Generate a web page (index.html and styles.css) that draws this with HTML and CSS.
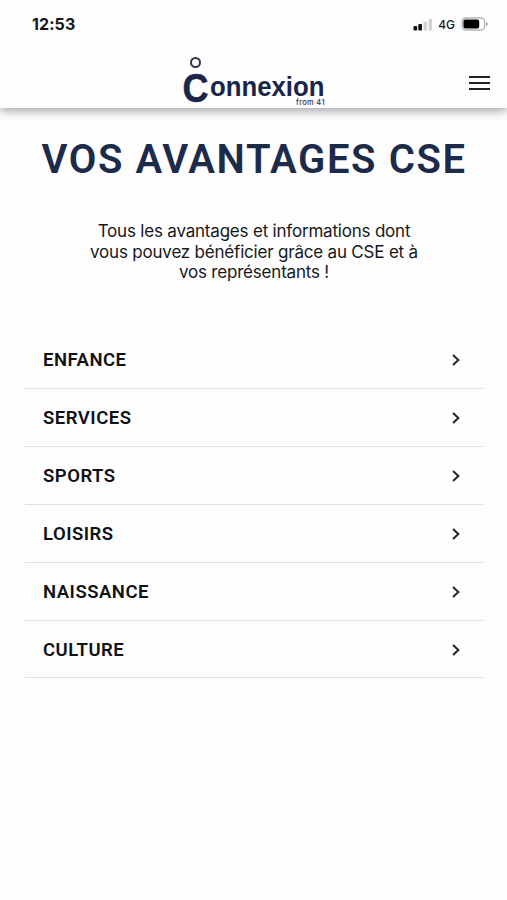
FILE: index.html
```html
<!DOCTYPE html>
<html lang="fr">

<head>
  <meta charset="UTF-8" />
  <meta name="viewport" content="width=device-width, initial-scale=1.0" />
  <title>Connexion - Vos avantages CSE</title>
  <link rel="stylesheet" href="styles.css">
</head>

<body>
  <div class="status-bar">
    <span class="clock">12:53</span>
    <div class="status-icons">
      <svg class="signal" width="20" height="13" viewBox="0 0 20 13">
        <rect x="0.5" y="8" width="3.7" height="4.4" rx="1" fill="#111" />
        <rect x="5.3" y="6" width="3.7" height="6.4" rx="1" fill="#111" />
        <rect x="10.5" y="3.4" width="3.5" height="9" rx="1" fill="#d2d2d3" />
        <rect x="15.5" y="0.8" width="3.5" height="11.6" rx="1" fill="#d2d2d3" />
      </svg>
      <span class="network">4G</span>
      <svg class="battery" width="28" height="14" viewBox="0 0 28 14">
        <rect x="1" y="1" width="22.6" height="12" rx="3.6" fill="#fff" stroke="#b4b4b5" stroke-width="1.3" />
        <rect x="2.4" y="2.4" width="15.8" height="9.2" rx="2" fill="#000" />
        <path d="M25 4.8 Q27 5.6 27 7 Q27 8.4 25 9.2 Z" fill="#b4b4b5" />
      </svg>
    </div>
  </div>

  <header class="header">
    <a class="logo" href="#">
      <svg width="146" height="54" viewBox="0 0 146 54">
        <circle cx="14.5" cy="8.5" r="4.5" fill="none" stroke="#303647" stroke-width="2" />
        <text class="logo-initial" x="1.5" y="47.5" textLength="26" lengthAdjust="spacingAndGlyphs">C</text>
        <text class="logo-name" x="29" y="41.5" textLength="114.5" lengthAdjust="spacingAndGlyphs">onnexion</text>
        <text class="logo-tag" x="115" y="50.5" textLength="28.5">from 41</text>
      </svg>
    </a>
    <button class="menu-btn" aria-label="Menu">
      <span></span>
      <span></span>
      <span></span>
    </button>
  </header>

  <main class="content">
    <h1 class="main-title">VOS AVANTAGES CSE</h1>
    <p class="intro">Tous les avantages et informations dont<br>vous pouvez bénéficier grâce au CSE et à<br>vos représentants !</p>

    <ul class="menu-list">
      <li><span>ENFANCE</span><svg class="chevron" viewBox="0 0 10 14"><path d="M2 2 L7.4 7 L2 12" /></svg></li>
      <li><span>SERVICES</span><svg class="chevron" viewBox="0 0 10 14"><path d="M2 2 L7.4 7 L2 12" /></svg></li>
      <li><span>SPORTS</span><svg class="chevron" viewBox="0 0 10 14"><path d="M2 2 L7.4 7 L2 12" /></svg></li>
      <li><span>LOISIRS</span><svg class="chevron" viewBox="0 0 10 14"><path d="M2 2 L7.4 7 L2 12" /></svg></li>
      <li><span>NAISSANCE</span><svg class="chevron" viewBox="0 0 10 14"><path d="M2 2 L7.4 7 L2 12" /></svg></li>
      <li><span>CULTURE</span><svg class="chevron" viewBox="0 0 10 14"><path d="M2 2 L7.4 7 L2 12" /></svg></li>
    </ul>
  </main>
</body>

</html>
```

FILE: styles.css
```css
* {
  box-sizing: border-box;
}

body {
  margin: 0;
  font-family: Inter, "Liberation Sans", sans-serif;
  background: #fdfdfe;
  color: #17181b;
  min-height: 100vh;
}

/* Barre de statut */
.status-bar {
  display: flex;
  justify-content: space-between;
  align-items: center;
  height: 48px;
  padding: 0 18px 0 32px;
}

.clock {
  font-size: 16px;
  font-weight: 650;
  letter-spacing: 0.1px;
}

.status-icons {
  display: flex;
  align-items: center;
}

.network {
  font-size: 12px;
  font-weight: 500;
  margin: 1px 6px 0 5px;
}

/* En-tête */
.header {
  display: grid;
  grid-template-columns: 1fr 146px 1fr;
  height: 60px;
  padding: 6px 17px 0;
  box-shadow: 0 3px 9px rgba(40, 44, 52, 0.42);
  clip-path: inset(0 0 -20px 0);
}

.logo {
  grid-column: 2;
  height: 54px;
}

.logo svg {
  display: block;
  overflow: visible;
}

.logo-initial {
  font: bold 40px "Liberation Sans", sans-serif;
  fill: #1b2547;
  stroke: #1b2547;
  stroke-width: 0.5px;
}

.logo-name {
  font: bold 27px "Liberation Sans", sans-serif;
  fill: #1b2547;
}

.logo-tag {
  font-size: 7.5px;
  font-weight: 500;
  fill: #303647;
}

.menu-btn {
  display: flex;
  flex-direction: column;
  gap: 4px;
  justify-self: end;
  align-self: start;
  margin-top: 22px;
  padding: 0;
  border: none;
  background: none;
  cursor: pointer;
}

.menu-btn span {
  width: 21px;
  height: 2px;
  background: #202124;
}

/* Contenu */
.content {
  padding: 28px 24px 0 25px;
}

.main-title {
  margin: 0;
  font-family: Roboto, Inter, sans-serif;
  font-size: 40px;
  line-height: 48px;
  font-weight: 600;
  letter-spacing: 1.6px;
  text-align: center;
  white-space: nowrap;
  color: #1d2b4b;
}

.intro {
  margin: 37px 0 48px;
  font-size: 17px;
  line-height: 20.7px;
  letter-spacing: -0.2px;
  text-align: center;
}

.menu-list {
  list-style: none;
  margin: 0;
  padding: 0;
}

.menu-list li {
  display: flex;
  justify-content: space-between;
  align-items: center;
  height: 57.9px;
  padding: 1px 22px 0 18px;
  border-bottom: 1px solid #dfe0e2;
  font-family: Roboto, Inter, sans-serif;
  font-size: 18.5px;
  font-weight: 600;
  letter-spacing: 0.5px;
  color: #111214;
}

.chevron {
  width: 10px;
  height: 14px;
  fill: none;
  stroke: #26272b;
  stroke-width: 2;
}
```
